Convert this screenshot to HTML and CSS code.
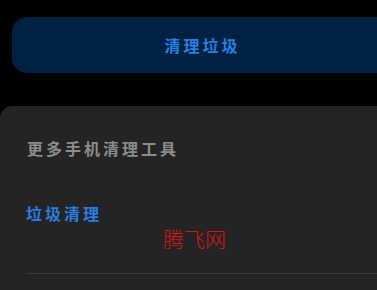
FILE: index.html
```html
<!DOCTYPE html>
<html lang="zh-CN">
<head>
  <meta charset="UTF-8">
  <title>清理垃圾</title>
  <link rel="stylesheet" href="styles.css">
</head>
<body>
  <div class="page">
    <div class="clean-btn">清理垃圾</div>
    <div class="card">
      <div class="card-title">更多手机清理工具</div>
      <div class="tool-item">
        <div class="tool-name">垃圾清理</div>
        <div class="mark">腾飞网</div>
      </div>
    </div>
  </div>
</body>
</html>
```

FILE: styles.css
```css
/*common*/
* {
  box-sizing: border-box;
  margin: 0;
  padding: 0;
}
html, body {
  background: #000;
}
body {
  font-family: "Noto Sans CJK SC", sans-serif;
}
.page {
  width: 377px;
  height: 290px;
  padding-top: 17px;
  overflow: hidden;
}
.clean-btn {
  margin: 0 -16px 0 12px;
  height: 56px;
  border-radius: 15px;
  background: #002242;
  color: #2a7ee0;
  font-size: 16px;
  font-weight: 700;
  letter-spacing: 3px;
  display: flex;
  align-items: center;
  justify-content: center;
}
.card {
  margin-top: 33px;
  height: 184px;
  background: #242424;
  border-top-left-radius: 12px;
  padding: 30px 0 0 27px;
}
.card-title {
  color: #8c8c8c;
  font-size: 16px;
  font-weight: 700;
  letter-spacing: 3px;
  line-height: 24px;
}
.tool-item {
  margin: 41px 0 0 -1px;
  height: 73px;
  border-bottom: 1px solid #3a3a3a;
}
.tool-name {
  color: #2a7ee0;
  font-size: 16px;
  font-weight: 700;
  letter-spacing: 3px;
  line-height: 24px;
}
.mark {
  margin-left: 137px;
  color: #d4141e;
  font-size: 21px;
  line-height: 26px;
  font-family: "Noto Sans CJK SC", sans-serif;
  font-weight: 300;
}
```
